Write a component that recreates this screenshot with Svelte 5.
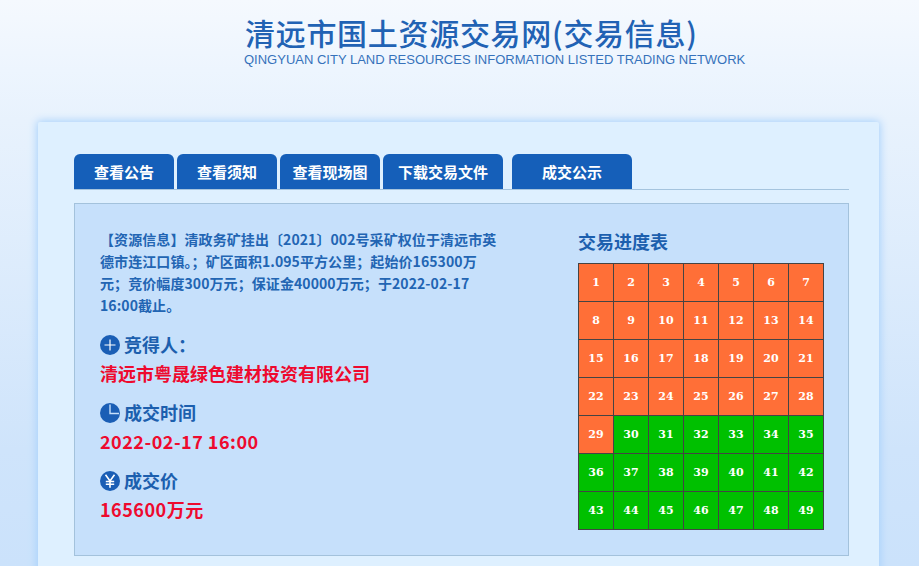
<script>
  const cells = Array.from({ length: 49 }, (_, i) => i + 1);
  const tabs = [
    { label: '查看公告', w: 'w100' },
    { label: '查看须知', w: 'w100' },
    { label: '查看现场图', w: 'w100' },
    { label: '下载交易文件', w: 'w120' },
    { label: '成交公示', w: 'w120 last' }
  ];
</script>

<div class="page">
  <header class="head">
    <h1>清远市国土资源交易网(交易信息)</h1>
    <p>QINGYUAN CITY LAND RESOURCES INFORMATION LISTED TRADING NETWORK</p>
  </header>

  <main class="card">
    <nav class="tabs">
      {#each tabs as t}
        <a class="tab {t.w}" href="#top">{t.label}</a>
      {/each}
    </nav>

    <section class="panel">
      <div class="left">
        <p class="intro">【资源信息】清政务矿挂出〔2021〕002号采矿权位于清远市英<br />德市连江口镇。；矿区面积1.095平方公里；起始价165300万<br />元；竞价幅度300万元；保证金40000万元；于2022-02-17<br />16:00截止。</p>

        <div class="item first">
          <h3>
            <svg viewBox="0 0 20 20" class="ico"><circle cx="10" cy="10" r="10" fill="#1a5eb5" /><path d="M4.500 10h11M10 4.500v11" stroke="#fff" stroke-width="1.200" /></svg>
            <span>竞得人：</span>
          </h3>
          <div class="val">清远市粤晟绿色建材投资有限公司</div>
        </div>
        <div class="item">
          <h3>
            <svg viewBox="0 0 20 20" class="ico"><circle cx="10" cy="10" r="10" fill="#1a5eb5" /><path d="M10 1.500V10.500H19" fill="none" stroke="#c6e0fb" stroke-width="1.400" /></svg>
            <span>成交时间</span>
          </h3>
          <div class="val num">2022-02-17 16:00</div>
        </div>
        <div class="item">
          <h3>
            <svg viewBox="0 0 20 20" class="ico"><circle cx="10" cy="10" r="10" fill="#1a5eb5" /><path d="M5.500 3.800L10 10l4.500-6.200M10 10v6.800M5.800 10.500h8.400M5.800 13.200h8.400" fill="none" stroke="#fff" stroke-width="1.600" /></svg>
            <span>成交价</span>
          </h3>
          <div class="val num">165600万元</div>
        </div>
      </div>

      <div class="right">
        <h2>交易进度表</h2>
        <div class="grid">
          {#each cells as n}
            <div class="cell" class:done={n >= 30}>{n}</div>
          {/each}
        </div>
      </div>
    </section>
  </main>
</div>

<style>
  :global(body) {
    margin: 0;
    background: #fff;
  }
  .page {
    height: 566px;
    overflow: hidden;
    background: linear-gradient(180deg, #f5f9fe 0%, #edf5fe 70px, #e8f2fd 120px, #cfe4fb 450px, #cbe2fb 100%);
    font-family: "Noto Sans CJK SC", "Noto Sans", sans-serif;
  }
  .head {
    height: 122px;
    box-sizing: border-box;
    padding: 15px 0 0 245px;
  }
  h1 {
    margin: 0;
    font-size: 30px;
    line-height: 35px;
    font-weight: 500;
    letter-spacing: 0.7px;
    color: #2162b4;
    white-space: nowrap;
  }
  .head p {
    margin: 2px 0 0 -1px;
    font-family: "Liberation Sans", Arial, sans-serif;
    font-size: 13px;
    line-height: 16px;
    color: #3672bb;
    white-space: nowrap;
  }
  .card {
    width: 841px;
    height: 460px;
    margin-left: 38px;
    box-sizing: border-box;
    padding: 32px 30px 0 36px;
    background: #def0ff;
    box-shadow: 0 0 9px 1px #a5d0fb;
    border-radius: 2px;
  }
  .tabs {
    display: flex;
    gap: 3px;
    height: 35px;
    border-bottom: 1px solid #a5c4de;
    box-sizing: content-box;
  }
  .tab {
    height: 35px;
    line-height: 35px;
    text-align: center;
    background: #155fb9;
    color: #fff;
    font-size: 15px;
    font-weight: 700;
    border-radius: 6px 6px 0 0;
    text-decoration: none;
  }
  .w100 { width: 100px; }
  .w120 { width: 120px; }
  .last { margin-left: 6px; }
  .panel {
    margin-top: 13px;
    width: 775px;
    height: 353px;
    box-sizing: border-box;
    border: 1px solid #a3c2dc;
    background: #c6e0fb;
    display: flex;
    padding: 0 0 0 25px;
  }
  .left {
    width: 398px;
  }
  .intro {
    margin: 24px 0 0;
    font-size: 14px;
    line-height: 22px;
    letter-spacing: 0.08px;
    font-weight: 700;
    color: #2265b3;
    white-space: nowrap;
  }
  .item { margin-top: 12px; }
  .item.first { margin-top: 15px; }
  h3 {
    margin: 0;
    display: flex;
    align-items: center;
    gap: 4px;
    font-size: 18px;
    line-height: 26px;
    font-weight: 700;
    color: #1c5fae;
  }
  .ico { width: 20px; height: 20px; flex: none; margin-top: 2px; }
  .val {
    margin-top: 2px;
    font-size: 18px;
    line-height: 28px;
    font-weight: 700;
    color: #ee0a2e;
    white-space: nowrap;
  }
  .num { letter-spacing: 0.5px; }
  .right {
    margin-left: 80px;
    width: 246px;
  }
  h2 {
    margin: 25px 0 10px;
    font-size: 18px;
    line-height: 24px;
    font-weight: 700;
    color: #1c5fae;
  }
  .grid {
    display: grid;
    grid-template-columns: repeat(7, 34px);
    grid-auto-rows: 37px;
    gap: 1px;
    padding: 1px;
    width: 246px;
    box-sizing: border-box;
    background: #444;
  }
  .cell {
    display: flex;
    align-items: center;
    justify-content: center;
    background: #ff6f37;
    color: #fff;
    font-family: "DejaVu Serif", serif;
    font-size: 11px;
    font-weight: 700;
  }
  .cell.done { background: #00c000; }
</style>
